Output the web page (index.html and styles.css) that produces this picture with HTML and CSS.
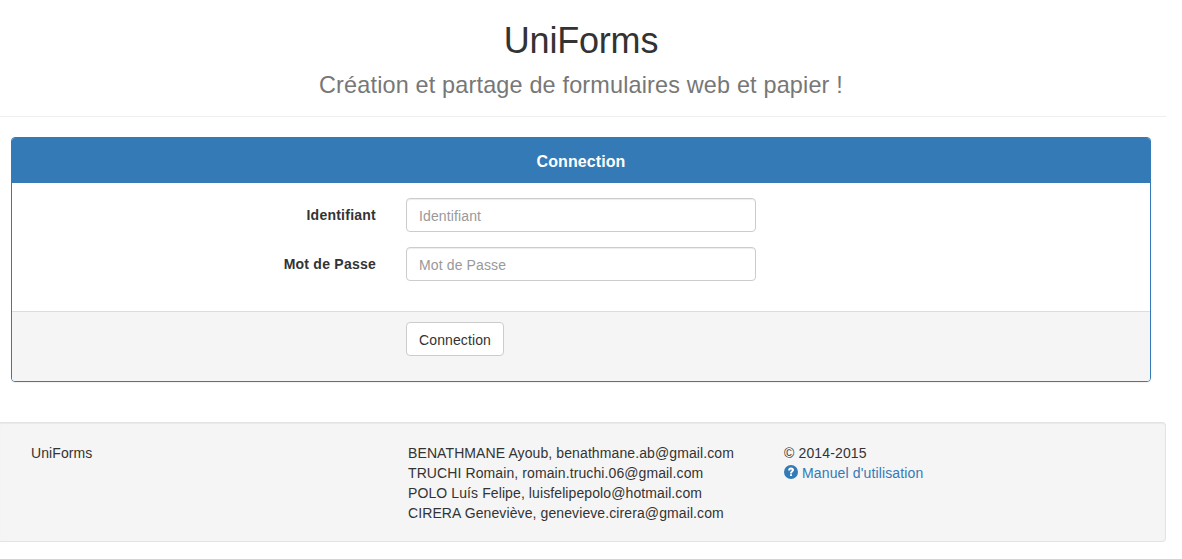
FILE: index.html
```html
<!DOCTYPE html>
<html lang="fr">
<head>
<meta charset="utf-8">
<title>UniForms</title>
<link rel="stylesheet" href="styles.css">
</head>
<body>
<header class="page-header">
  <h1>UniForms<br><small>Création et partage de formulaires web et papier !</small></h1>
</header>
<form class="panel">
  <div class="panel-heading">Connection</div>
  <div class="panel-body">
    <div class="form-group"><label for="login">Identifiant</label><input id="login" type="text" placeholder="Identifiant"></div>
    <div class="form-group"><label for="password">Mot de Passe</label><input id="password" type="password" placeholder="Mot de Passe"></div>
  </div>
  <div class="panel-footer"><button class="btn" type="button">Connection</button></div>
</form>
<footer class="well">
  <div class="col">UniForms</div>
  <div class="col">BENATHMANE Ayoub, benathmane.ab@gmail.com<br>TRUCHI Romain, romain.truchi.06@gmail.com<br>POLO Luís Felipe, luisfelipepolo@hotmail.com<br>CIRERA Geneviève, genevieve.cirera@gmail.com</div>
  <div class="col">© 2014-2015<br><a class="help" href="#"><svg class="icon" viewBox="0 0 14 14"><circle cx="7" cy="7" r="7" fill="currentColor"/><path d="M4.1 5.6C4.1 3.6 5.3 2.6 7.1 2.6s2.9 1 2.9 2.5c0 1.8-2 1.9-2 3.3H6c0-2.1 1.8-2.2 1.8-3.1 0-.6-.3-.8-.8-.8-.6 0-.8.4-.8 1.1zM6 9.2h2v1.9H6z" fill="#fff"/></svg><span class="help-text">Manuel d'utilisation</span></a></div>
</footer>
</body>
</html>
```
FILE: styles.css
```css
* { box-sizing: border-box; }
body {
  margin: 0;
  width: 1166px;
  font: 14px/20px "Liberation Sans", Arial, sans-serif;
  letter-spacing: .1px;
  color: #333;
  background: #fff;
}
.page-header {
  height: 117px;
  padding-top: 21px;
  padding-right: 4px;
  border-bottom: 1px solid #eee;
  text-align: center;
}
h1 { margin: 0; font-size: 36px; font-weight: 400; line-height: 39.6px; letter-spacing: -.2px; }
h1 small { font-size: 23.4px; letter-spacing: .18px; color: #777; }
.panel {
  margin: 20px 15px 0 11px;
  height: 245px;
  border: 1px solid #337ab7;
  border-radius: 4px;
  box-shadow: 0 1px 1px rgba(0,0,0,.05);
  overflow: hidden;
}
.panel-heading {
  height: 45px;
  padding-top: 14px;
  background: #337ab7;
  color: #fff;
  font-size: 16px;
  line-height: 20px;
  font-weight: 700;
  text-align: center;
}
.panel-body { height: 128px; padding-top: 15px; }
.form-group { display: flex; margin-bottom: 15px; }
label { width: 364px; margin-right: 30px; padding-top: 7px; font-weight: 700; letter-spacing: .24px; text-align: right; }
input {
  width: 350px;
  height: 34px;
  padding: 7px 12px 5px;
  border: 1px solid #ccc;
  border-radius: 4px;
  box-shadow: inset 0 1px 1px rgba(0,0,0,.075);
  font: inherit;
  letter-spacing: .13px;
}
input::placeholder { color: #999; opacity: 1; }
.panel-footer { height: 70px; padding: 10px 0 0 394px; background: #f5f5f5; border-top: 1px solid #ddd; }
.btn {
  height: 34px;
  padding: 7px 12px 5px;
  border: 1px solid #ccc;
  border-radius: 4px;
  background: #fff;
  color: #333;
  font: inherit;
  letter-spacing: .12px;
}
.well {
  display: grid;
  grid-template-columns: 377px 376px 1fr;
  height: 120px;
  margin-top: 40px;
  padding: 20px 0 0 31px;
  background: #f5f5f5;
  border: 1px solid #e3e3e3;
  border-left: 0;
  border-radius: 0 4px 4px 0;
  box-shadow: inset 0 1px 1px rgba(0,0,0,.05);
}
.col:last-child { letter-spacing: .14px; }
.help { color: #337ab7; text-decoration: none; }
.help-text { margin-left: 4px; }
.icon { width: 14px; height: 14px; vertical-align: -1px; }
```
